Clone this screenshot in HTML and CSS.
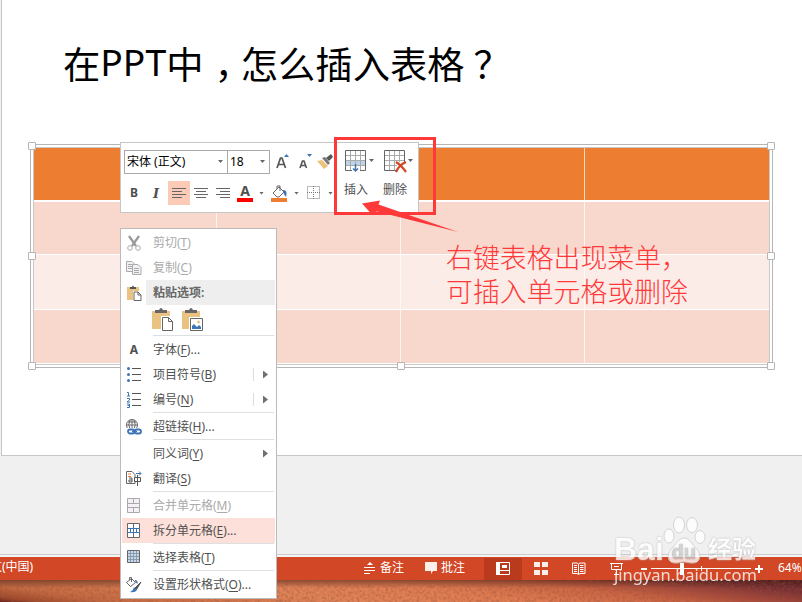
FILE: index.html
```html
<!DOCTYPE html>
<html lang="zh-CN">
<head>
  <meta charset="UTF-8" />
  <meta name="viewport" content="width=device-width, initial-scale=1.0" />
  <title>在PPT中，怎么插入表格？</title>
  <link rel="stylesheet" href="styles.css">
</head>

<body>
  <main class="workspace">
    <section class="slide">
      <h1>在<span class="latin">PPT</span>中<span class="comma">，</span>怎么插入表格<span class="question">？</span></h1>

      <div class="table-frame">
        <div class="table">
          <div class="row head"><i></i><i></i><i></i><i></i></div>
          <div class="row"><i></i><i></i><i></i><i></i></div>
          <div class="row light"><i></i><i></i><i></i><i></i></div>
          <div class="row"><i></i><i></i><i></i><i></i></div>
        </div>
        <b class="handle top left"></b>
        <b class="handle top right"></b>
        <b class="handle middle left"></b>
        <b class="handle middle right"></b>
        <b class="handle bottom left"></b>
        <b class="handle bottom center"></b>
        <b class="handle bottom right"></b>
      </div>
    </section>
  </main>

  <footer class="statusbar">
    <span class="lang">文(中国)</span>
    <span class="status-item notes">
      <svg width="12" height="14" viewBox="0 0 12 14"><path d="M6 1l3 3H3z" fill="#fff"/><path d="M0 6.5h11M0 9.5h11M0 12.5h6" stroke="#fff"/></svg>
      备注
    </span>
    <span class="status-item comments">
      <svg width="13" height="13" viewBox="0 0 13 13"><path d="M0 1h12v9H8l-2 3V10H0z" fill="#fdeeea"/></svg>
      批注
    </span>
    <span class="view active"><svg width="14" height="13" viewBox="0 0 14 13"><path d="M.5.5h13v12H.5zM4 8.500h9" fill="none" stroke="#fff"/><path d="M0 0h4v13H0zM6 3h5v3H6z" fill="#fff"/></svg></span>
    <span class="view"><svg width="14" height="13" viewBox="0 0 14 13"><path d="M0 0h6v5H0zM8 0h6v5H8zM0 8h6v5H0zM8 8h6v5H8z" fill="#fdeeea"/></svg></span>
    <span class="view"><svg width="14" height="14" viewBox="0 0 14 14"><path d="M.5 1H5l1.500 1L8 1h5v10.500H8l-1.500 1-1.500-1H.5zM6.500 2v10M2 3.500h3M2 5.500h3M2 7.500h3M2 9.500h3M8 3.500h3.500M8 5.500h3.500M8 7.500h3.500M8 9.500h3.500" fill="none" stroke="#fff"/></svg></span>
    <span class="view"><svg width="14" height="14" viewBox="0 0 14 14"><path d="M0 1.500h13M1.500 2v5.500h10V2M4 4.500h5M6.500 8v4M4 12.500h5" fill="none" stroke="#fff"/></svg></span>
    <span class="zoom">
      <svg width="124" height="14" viewBox="0 0 124 14"><path d="M0 7h6M114 7h8M118 3v8" stroke="#fff" stroke-width="2"/><path d="M10 6.500h100M60.500 4v5" stroke="#fff"/><path d="M39 1h4v12h-4z" fill="#fff"/></svg>
    </span>
    <span class="percent">64%</span>
  </footer>

  <div class="desktop">
    <svg width="802" height="22">
      <filter id="grain">
        <feTurbulence type="fractalNoise" baseFrequency=".35" numOctaves="3" seed="4" />
        <feColorMatrix values="0 0 0 0 .3  0 0 0 0 .08  0 0 0 0 .04  0 1 0 0 -.38" />
      </filter>
      <rect width="802" height="22" filter="url(#grain)" />
    </svg>
  </div>

  <div class="toolbar">
    <div class="format">
      <div class="tools">
        <span class="combo font-name">宋体 (正文)<u class="caret"></u></span>
        <span class="combo font-size">18<u class="caret"></u></span>
        <svg class="grow" width="14" height="16" viewBox="0 0 14 16"><path d="M1 14L4.500 4H6l3.500 10M2.500 10.500h6" fill="none" stroke="#555" stroke-width="1.700"/><path d="M8 3l2.500-3L13 3z" fill="#3d74b3"/></svg>
        <svg class="shrink" width="14" height="16" viewBox="0 0 14 16"><path d="M1 14l2.500-7h1.500l2.500 7M2.200 11.500H6.500" fill="none" stroke="#555" stroke-width="1.600"/><path d="M8 0h5l-2.500 3z" fill="#3d74b3"/></svg>
        <svg class="brush" width="17" height="16" viewBox="0 0 17 16"><path d="M0 7l5-1 6 6-4 3z" fill="#ecc27c"/><path d="M5 4l3-1 5 6-2 2z" fill="#777"/><path d="M9 4l5-4 2 3-4 4z" fill="#555"/></svg>
      </div>
      <div class="tools second">
        <span class="tool bold">B</span>
        <span class="tool italic">I</span>
        <span class="tool pressed"><svg width="14" height="12" viewBox="0 0 14 12"><path d="M0 .5h14M0 3.500h10M0 6.500h14M0 9.500h10" stroke="#666"/></svg></span>
        <span class="tool"><svg width="14" height="12" viewBox="0 0 14 12"><path d="M0 .5h14M2 3.500h10M0 6.500h14M2 9.500h10" stroke="#666"/></svg></span>
        <span class="tool"><svg width="14" height="12" viewBox="0 0 14 12"><path d="M0 .5h14M4 3.500h10M0 6.500h14M4 9.500h10" stroke="#666"/></svg></span>
        <span class="tool font-color">A</span>
        <u class="caret"></u>
        <svg class="fill" width="17" height="17" viewBox="0 0 17 17"><path d="M2 8l6-6 5 5-5 5-2 0zM6 4V1h3v5" fill="#fff" stroke="#666"/><path d="M12 5c4 0 4 3 3 7-2-2-2-4-3-5z" fill="#3d74b3"/><path d="M0 13h16v4H0z" fill="#ed7d31"/></svg>
        <u class="caret"></u>
        <svg class="border" width="14" height="14" viewBox="0 0 14 14"><path d="M.5.5h12v12H.5zM6.500 0v13M0 6.500h13" fill="none" stroke="#777" stroke-dasharray="1 1"/></svg>
        <u class="caret"></u>
      </div>
    </div>
    <div class="big">
      <div><svg width="22" height="23" viewBox="0 0 22 23"><path d="M1 1h20v20H1z" fill="#fff"/><path d="M1 11h20v5H1z" fill="#bfd3e8"/><path d="M5.500 1v20M10.500 1v20M15.500 1v20M1 5.500h20M1 10.500h20M1 15.500h20" stroke="#aaa"/><path d="M.5.5h20v20H.5z" fill="none" stroke="#666"/><path d="M7 16h8v7H7z" fill="#fff"/><path d="M10.500 14v7M8 18.500l2.500 2.500 2.500-2.500" fill="none" stroke="#3d74b3" stroke-width="1.500"/></svg><u class="caret"></u></div>
      <span>插入</span>
    </div>
    <div class="big">
      <div><svg width="24" height="23" viewBox="0 0 24 23"><path d="M5.500 1v20M10.500 1v20M15.500 1v20M1 5.500h20M1 10.500h20M1 15.500h20" stroke="#aaa"/><path d="M.5.5h20v20H.5z" fill="none" stroke="#666"/><path d="M13 12h11v11H13z" fill="#fff"/><path d="M12 12q5 3 10 10M22 12q-7 3-10 10" fill="none" stroke="#d24726" stroke-width="2.200"/></svg><u class="caret"></u></div>
      <span>删除</span>
    </div>
  </div>

  <ul class="menu">
    <li class="disabled"><svg width="16" height="16" viewBox="0 0 16 16"><path d="M3 1l7 10M13 1L6 11" fill="none" stroke="#999" stroke-width="2.200"/><circle cx="4" cy="13" r="2.300" fill="none" stroke="#aaa"/><circle cx="12" cy="13" r="2.300" fill="none" stroke="#aaa"/></svg>剪切(<u>T</u>)</li>
    <li class="disabled"><svg width="16" height="16" viewBox="0 0 16 16"><path d="M.5 1.500H6l3 3v7H.5zM2 4.500h4M2 6.500h4M2 8.500h4" fill="#f3f0f5" stroke="#aaa"/><path d="M6.500 4.500H12l3 3v7H6.500zM8 8.500h5M8 10.500h5M8 12.500h5" fill="#f3f0f5" stroke="#aaa"/></svg>复制(<u>C</u>)</li>
    <li class="header"><svg width="16" height="16" viewBox="0 0 16 16"><path d="M1 2h12v13H1z" fill="#eac282"/><path d="M4 4V2h2q1-3 2 0h2v2z" fill="#555"/><path d="M7 6h9v10H7z" fill="#fff"/><path d="M8 7h4l3 3v5.500H8zM12 7v3h3" fill="#fff" stroke="#666"/></svg><b>粘贴选项:</b></li>
    <li class="paste">
      <svg width="22" height="24" viewBox="0 0 22 24"><path d="M0 3h18v18H0z" fill="#eac282"/><path d="M3 5V2h4q2-4 4 0h4v3z" fill="#666"/><path d="M9 8h13v16H9z" fill="#fff"/><path d="M10.500 9.500h6l4 4v9h-10zM16.500 9.500v4h4" fill="#fff" stroke="#666"/></svg>
      <svg width="22" height="24" viewBox="0 0 22 24"><path d="M0 3h18v18H0z" fill="#eac282"/><path d="M3 5V2h4q2-4 4 0h4v3z" fill="#666"/><path d="M7 9h15v15H7z" fill="#fff"/><path d="M8.500 10.500h12v12h-12z" fill="#fff" stroke="#666"/><path d="M10 21v-3l2-2 3 3 2-2 2 2v2z" fill="#3d74b3"/><circle cx="16.500" cy="14" r="1.500" fill="#eac282"/></svg>
    </li>
    <li class="split"><span class="letter">A</span>字体(<u>F</u>)...</li>
    <li><svg width="16" height="16" viewBox="0 0 16 16"><path d="M6 1.500h9M6 7.500h9M6 13.500h9" stroke="#555"/><g fill="#3d74b3"><circle cx="2.500" cy="1.500" r="1.500"/><circle cx="2.500" cy="7.500" r="1.500"/><circle cx="2.500" cy="13.500" r="1.500"/></g></svg>项目符号(<u>B</u>)<em class="sub divided"></em></li>
    <li><svg width="16" height="16" viewBox="0 0 16 16"><path d="M6 1.500h9M6 7.500h9M6 13.500h9" stroke="#555"/><path d="M1 .5h1.500V4M1 4h3M1 6.500h2.500v1.500L1 10h3M1 12h2.500v3.500H1M1.500 13.500h2" fill="none" stroke="#3d74b3"/></svg>编号(<u>N</u>)<em class="sub divided"></em></li>
    <li class="split"><svg width="16" height="16" viewBox="0 0 16 16"><circle cx="6" cy="6" r="5.500" fill="none" stroke="#666"/><path d="M.5 6h11M2 3h8M6 .5v9M4 1Q1.500 6 4 10M8 1q2.500 5 0 9" fill="none" stroke="#666"/><path d="M1 9h15v7H1z" fill="#fff"/><rect x="2" y="10.500" width="6.500" height="4" rx="2" fill="none" stroke="#3d74b3" stroke-width="1.800"/><rect x="8.500" y="10.500" width="6.500" height="4" rx="2" fill="none" stroke="#3d74b3" stroke-width="1.800"/><path d="M6 12.500h5" stroke="#3d74b3" stroke-width="1.500"/></svg>超链接(<u>H</u>)...</li>
    <li class="split">同义词(<u>Y</u>)<em class="sub"></em></li>
    <li><svg width="16" height="16" viewBox="0 0 16 16"><path d="M.5.5H6l3 3v9H.5z" fill="#fff" stroke="#666"/><path d="M2 3h3M2 5.500h3" stroke="#ed7d31"/><path d="M3 7h3v4H3V9h3" fill="none" stroke="#555"/><path d="M8.500 6.500h6v4h-6zM11.500 4v11" fill="#fff" stroke="#555"/><path d="M10 2.500h5M13 .5l2 2-2 2" fill="none" stroke="#3d74b3"/></svg>翻译(<u>S</u>)</li>
    <li class="split disabled"><svg width="16" height="16" viewBox="0 0 16 16"><path d="M1.500.5h12v14h-12zM1.500 5.500h12M1.500 9.500h12M7.500.5v5M7.500 9.500v5" fill="#f5f0f6" stroke="#aaa"/></svg>合并单元格(<u>M</u>)</li>
    <li class="hover"><svg width="16" height="16" viewBox="0 0 16 16"><path d="M1.500.5h12v14h-12zM7.500.5V5M7.500 10v4.500" fill="#fff" stroke="#666"/><path d="M1 5.500h13M1 9.500h13M4.500 6v4M7.500 6v4M10.500 6v4" stroke="#3d74b3"/></svg>拆分单元格(<u>E</u>)...</li>
    <li class="split"><svg width="16" height="16" viewBox="0 0 16 16"><path d="M1.500.5h12v12h-12z" fill="#c4d9ee" stroke="#666"/><path d="M4.500 1v11M7.500 1v11M10.500 1v11M2 3.500h11M2 6.500h11M2 9.500h11" stroke="#8a9aab"/></svg>选择表格(<u>T</u>)</li>
    <li class="split last"><svg width="16" height="16" viewBox="0 0 16 16"><path d="M.5 5.500l5-4 4 4-5 4zM3.500 3V.5h2V5" fill="#fff" stroke="#666"/><path d="M9 3q3 0 2.500 4-1.500-1-2.500-3z" fill="#3d74b3"/><path d="M15 5l-6 6 1.500 1.500z" fill="#555" stroke="#555"/><path d="M8 10l3 3q-2 3-7 2 3-1 4-5z" fill="#3d74b3"/></svg>设置形状格式(<u>O</u>)...</li>
  </ul>

  <div class="red-box"></div>
  <svg class="arrow" width="98" height="34" viewBox="0 0 98 34"><path d="M2 3.500l18-3-1.500 4L98 32 17 11.500 11.500 14z" fill="#ff3939"/></svg>
  <p class="note">右键表格出现菜单，<br>可插入单元格或删除</p>

  <div class="watermark">
    <div class="brand">
      <span class="bai">Bai</span>
      <svg width="46" height="50" viewBox="0 0 46 50"><g fill="#fff" stroke="#ccc"><ellipse cx="7" cy="20" rx="5" ry="7"/><ellipse cx="17" cy="9" rx="5.500" ry="8"/><ellipse cx="30" cy="9" rx="5.500" ry="7.500"/><ellipse cx="38" cy="21" rx="5" ry="6.500"/><path d="M22 22c5 0 7 5 11 9 6 5 7 15-1 16-4 .5-7-1-10-1s-6 1.500-10 1c-8-1-7-11-1-16 4-4 6-9 11-9z"/></g><text x="9.500" y="43">du</text></svg>
      <span class="jingyan">经验</span>
    </div>
    <div class="url">jingyan.baidu.com</div>
  </div>
</body>
</html>
```
FILE: styles.css
```css
/* Root Variables */
:root {
  --accent: #d24726;
  --orange: #ed7d31;
  --pink: #f8d7cd;
  --pink-light: #fcece8;
  --line: #c6c6c6;
  --text: #505050;
  --red: #ff3939;
}

* {
  box-sizing: border-box;
}

body {
  position: relative;
  width: 802px;
  height: 602px;
  margin: 0;
  overflow: hidden;
  font: 12px/1 "Noto Sans", "Noto Sans CJK SC", sans-serif;
  color: var(--text);
}

svg {
  display: block;
  flex: none;
}

/* Slide */
.workspace {
  height: 557px;
  padding-left: 1px;
  background: linear-gradient(#f0f0f0 554px, #ccc 554px, #ccc 555px, #f3f3f3 555px);
}

.slide {
  height: 456px;
  background: #fff;
  border-left: 1px solid var(--line);
  border-bottom: 1px solid var(--line);
}

h1 {
  display: flex;
  height: 144px;
  margin: 0;
  padding: 36px 0 0 61px;
  font: 400 37.300px/54px "Noto Sans CJK SC", sans-serif;
  color: #000;
  white-space: nowrap;
}

.latin {
  margin-top: -1px;
  font-family: "Noto Sans", sans-serif;
}

.comma,
.question {
  width: 37.300px;
}

.comma {
  padding-left: 11px;
}

.question {
  padding-left: 9px;
}

/* Table */
.table-frame {
  position: relative;
  width: 743px;
  height: 224px;
  margin-left: 28px;
  padding: 2px;
  border: 1px solid #b5b5b5;
}

.table {
  display: grid;
  height: 218px;
  grid-template-rows: 54px 53px 55px 54px;
  border: 1px solid #c9c9c9;
}

.row {
  display: grid;
  grid-template-columns: 183px 184px 184px 1fr;
  background: var(--pink);
  border-bottom: 1px solid #fff;
}

.row.head {
  background: var(--orange);
  border-bottom: 2px solid #fff;
}

.row.light {
  background: var(--pink-light);
}

.row i {
  border-right: 1px solid rgba(255, 255, 255, .7);
}

.row i:last-child {
  border: 0;
}

.handle {
  position: absolute;
  width: 8px;
  height: 8px;
  background: #fff;
  border: 1px solid #b5b5b5;
  border-radius: 1px;
}

.handle.top { top: -3px; }
.handle.middle { top: 107px; }
.handle.bottom { bottom: -3px; }
.handle.left { left: -3px; }
.handle.center { left: 366px; }
.handle.right { right: -3px; }

/* Status Bar */
.statusbar {
  display: flex;
  align-items: center;
  height: 23px;
  background: var(--accent);
  color: #fff;
  white-space: nowrap;
}

.statusbar .lang {
  width: 364px;
  text-indent: -10px;
  padding-bottom: 3px;
}

.status-item {
  display: flex;
  align-items: center;
  gap: 4px;
  width: 61px;
  padding-bottom: 2px;
}

.status-item.comments {
  gap: 3px;
  width: 59px;
}

.view {
  display: flex;
  align-items: center;
  justify-content: center;
  width: 38px;
  height: 22px;
}

.view.active {
  background: #b93a1d;
}

.zoom {
  margin-left: 5px;
}

.percent {
  margin-left: 13px;
  padding-bottom: 2px;
}

.desktop {
  height: 22px;
  background: linear-gradient(rgba(50, 20, 15, .5), transparent 8px), linear-gradient(8deg, #6b2218 0, #a04a2c 4%, #c56a42 12%, #e08458 36%, #e07c52 55%, #cc6644 70%, #a84a3c 80%, #783034 91%, #66262a);
}

/* Floating Toolbar */
.toolbar {
  position: absolute;
  top: 142px;
  left: 120px;
  display: flex;
  width: 299px;
  height: 71px;
  background: #fff;
  border: 1px solid var(--line);
}

.format {
  width: 217px;
  padding: 7px 0 0 3px;
}

.tools {
  display: flex;
  align-items: center;
  height: 24px;
}

.tools.second {
  margin-top: 7px;
}

.combo {
  display: flex;
  align-items: center;
  justify-content: space-between;
  height: 24px;
  padding: 0 4px 1px 2px;
  border: 1px solid #aaa;
  color: #000;
  white-space: nowrap;
}

.font-name {
  width: 104px;
}

.font-size {
  width: 43px;
  margin-left: -1px;
}

.caret {
  flex: none;
  width: 5px;
  height: 3px;
  background: #666;
  clip-path: polygon(0 0, 100% 0, 50% 100%);
}

.grow { margin-left: 6px; }
.shrink { margin-left: 9px; }
.brush { margin-left: 4px; }

.tool {
  display: flex;
  align-items: center;
  justify-content: center;
  width: 22px;
  height: 24px;
  font-weight: bold;
}

.tool:first-child { margin-left: -1px; }
.tool svg { margin-top: 2px; }

.bold {
  padding-bottom: 1px;
}

.italic {
  font: italic bold 13px "DejaVu Serif", serif;
}

.pressed {
  margin-left: 1px;
  background: #fbcbb5;
}

.font-color {
  width: 16px;
  height: 17px;
  margin: 0 6px 0 3px;
  padding-bottom: 0;
  border-bottom: 4px solid #f00;
  font-size: 14px;
}

.fill { margin: 0 6px 0 7px; }
.border { margin: 0 7px 0 8px; }

.big {
  width: 39px;
  padding: 7px 0 0 6px;
}

.big div {
  display: flex;
  height: 23px;
  padding-left: 1px;
}

.big .caret { margin: 9px 3px 0 auto; }

.big span {
  display: block;
  margin-top: 11px;
  white-space: nowrap;
}

/* Context Menu */
.menu {
  position: absolute;
  top: 228px;
  left: 120px;
  width: 157px;
  height: 371px;
  margin: 0;
  padding: 1px;
  list-style: none;
  background: #fff;
  border: 1px solid #bbb;
}

.menu li {
  display: flex;
  align-items: center;
  height: 25px;
  padding-left: 31px;
  white-space: nowrap;
}

.menu li > svg:first-child,
.letter {
  width: 16px;
  margin: 0 11px 0 -27px;
}

.letter {
  font-size: 12px;
  font-weight: bold;
  text-align: center;
}

.menu u {
  text-underline-offset: 2px;
}

.menu .disabled {
  color: #aaa;
}

.menu .header {
  background: linear-gradient(90deg, #fff 24px, #eee 24px);
}

.menu .header b {
  font-weight: 600;
  color: #666;
}

.menu li.paste {
  height: 30px;
  gap: 8px;
}

.menu li.paste > svg:first-child {
  width: 22px;
  margin: 0 0 0 -1px;
}

.menu .split {
  height: 27px;
  padding-top: 2px;
  background: linear-gradient(#dde0e2, #dde0e2) 31px 0 / 121px 1px no-repeat;
}

.menu .hover {
  background: #fde0d9;
}

.menu .split.last {
  height: 28px;
}

.sub {
  display: flex;
  align-items: center;
  width: 22px;
  height: 13px;
  margin-left: auto;
  padding-left: 10px;
}

.sub::after {
  content: "";
  width: 5px;
  height: 8px;
  background: #707070;
  clip-path: polygon(0 0, 100% 50%, 0 100%);
}

.sub.divided {
  padding-left: 9px;
  border-left: 1px solid #ddd;
}

/* Annotations */
.red-box {
  position: absolute;
  top: 137px;
  left: 334px;
  width: 102px;
  height: 78px;
  border: 3px solid var(--red);
}

.arrow {
  position: absolute;
  top: 200px;
  left: 360px;
}

.note {
  position: absolute;
  top: 240px;
  left: 446px;
  margin: 0;
  font: 300 26.900px/34px "Noto Sans CJK SC", sans-serif;
  color: var(--red);
  white-space: nowrap;
}

/* Watermark */
.watermark {
  position: absolute;
  top: 515px;
  left: 614px;
  width: 146px;
  opacity: .8;
  color: #fff;
}

.brand {
  display: flex;
  align-items: flex-end;
  height: 50px;
  text-shadow: 0 0 1px #aaa, 0 0 2px #bbb;
}

.bai {
  width: 48px;
  font: bold 32px/32px "Liberation Sans", sans-serif;
}

.brand text {
  font: bold 20px "Liberation Sans", sans-serif;
  fill: #ccc;
}

.brand svg {
  margin-bottom: -1px;
}

.jingyan {
  font: bold 24px/34px "Noto Sans CJK SC", sans-serif;
}

.url {
  font: 16.500px/20px "Noto Sans", sans-serif;
}
```
